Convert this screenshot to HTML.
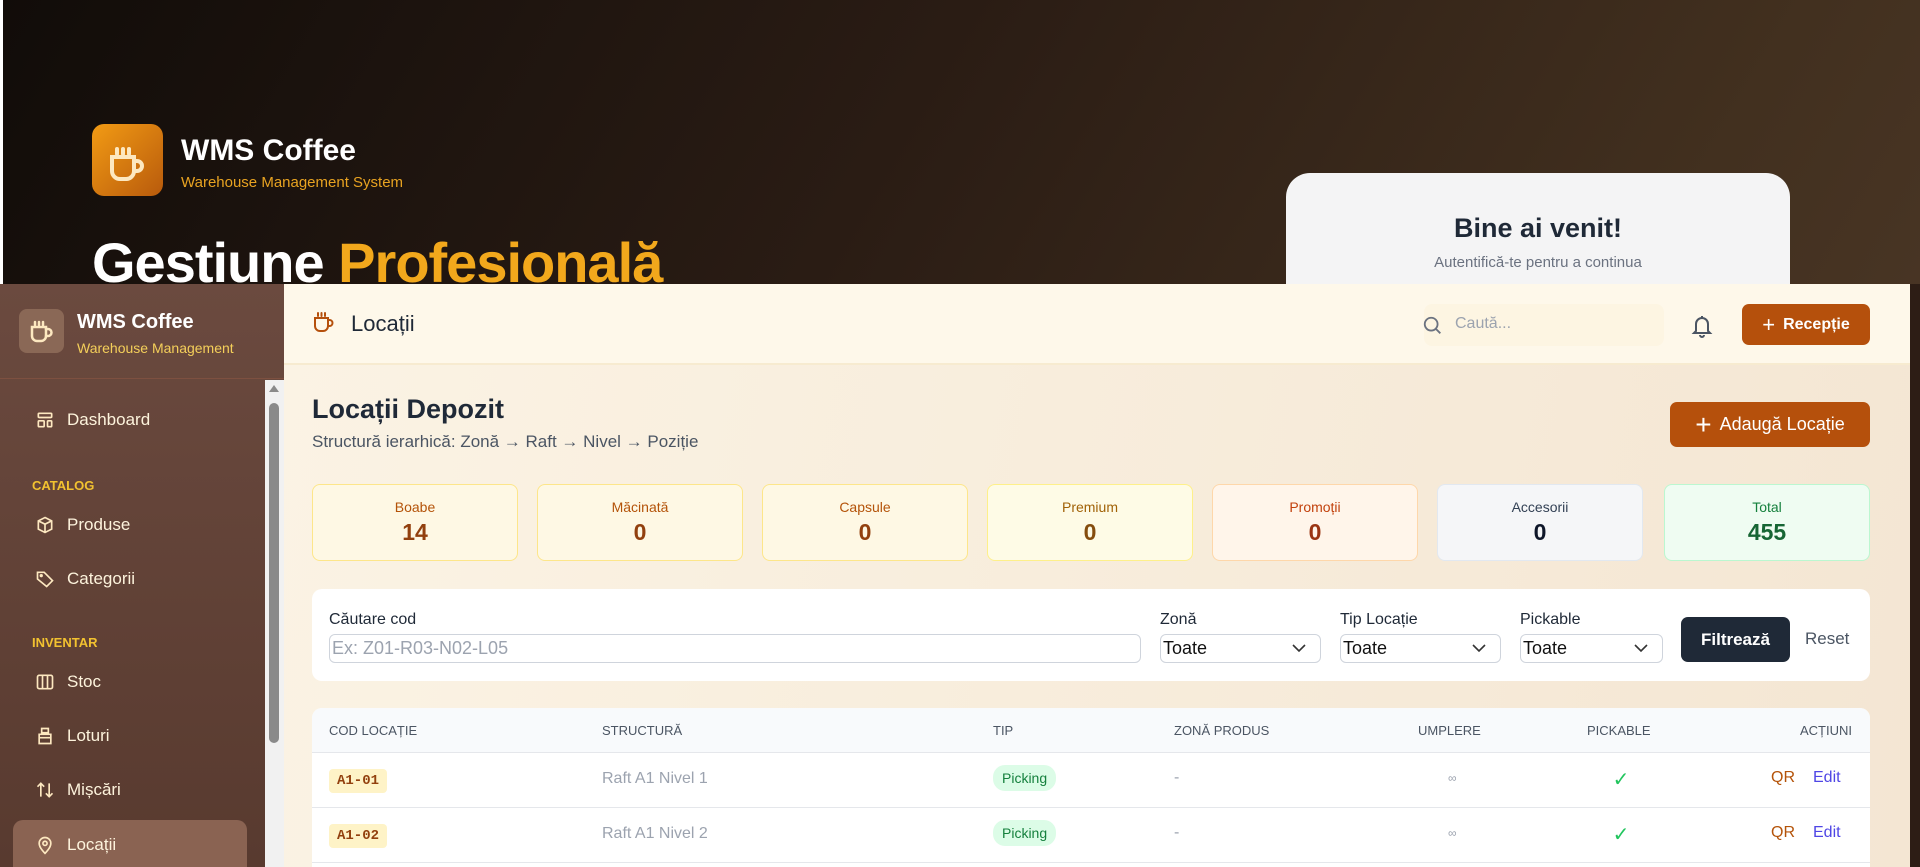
<!DOCTYPE html>
<html style="overflow:hidden;height:867px"><head><meta charset="utf-8"><style>
*{box-sizing:border-box;margin:0;padding:0}
body{width:1920px;height:867px;overflow:hidden;position:relative;font-family:"Liberation Sans",sans-serif;background:#1a120d}
.hero{position:absolute;inset:0;background:linear-gradient(120deg,#110c09 0%,#2a1c14 40%,#42301f 75%,#4f3a2a 100%)}
.hero:before{content:"";position:absolute;left:0;top:0;width:3px;height:867px;background:#fff}
.hl{position:absolute;left:92px;top:124px;width:71px;height:72px;border-radius:12px;background:linear-gradient(135deg,#f29b14,#b85a0c)}
.ht{position:absolute;left:181px;top:134px;color:#fff;font-weight:bold;font-size:30px}
.hs{position:absolute;left:181px;top:174px;color:#e8a321;font-size:15px}
.hh{position:absolute;left:92px;top:230px;color:#fff;font-weight:900;font-size:56px;letter-spacing:-1px}
.hh span{color:#f2a81c}
.card{position:absolute;left:1286px;top:173px;width:504px;height:200px;border-radius:24px;background:#f4f4f5;text-align:center}
.card h2{margin-top:40px;font-size:27px;color:#1f2937}
.card p{margin-top:10px;font-size:15px;color:#6b7280}
.side{position:absolute;left:0;top:284px;width:284px;height:583px;background:linear-gradient(#6b4a3f,#583a2f);overflow:hidden}
.sh{height:95px;border-bottom:1px solid #7d5040;position:relative}
.slogo{position:absolute;left:19px;top:25px;width:45px;height:44px;border-radius:8px;background:#8a6856}
.st{position:absolute;left:77px;top:27px;color:#fff;font-weight:bold;font-size:20px}
.ss{position:absolute;left:77px;top:56px;color:#f4cf5a;font-size:14px}
.scroll{position:absolute;left:265px;top:96px;width:19px;height:487px;background:#f1f1f1}
.scroll div{position:absolute;left:4px;top:23px;width:10px;height:340px;background:#8a8a8a;border-radius:5px}
.scroll i{position:absolute;left:4px;top:5px;border:5px solid transparent;border-bottom:7px solid #8a8a8a;border-top:0}
.nav{position:absolute;left:35px;color:#fdf3dc;font-size:17px;display:flex;align-items:center;gap:12px}
.nav svg{width:20px;height:20px;fill:none;stroke:#fde8c0;stroke-width:2}
.sec{position:absolute;left:32px;color:#f2c230;font-weight:bold;font-size:13px}
.active{position:absolute;left:13px;top:536px;width:234px;height:60px;border-radius:10px;background:#8a6352}
.main{position:absolute;left:284px;top:284px;width:1626px;height:583px;background:linear-gradient(100deg,#fbf3e4,#f4e6d3);overflow:hidden}
.rstrip{position:absolute;left:1910px;top:284px;width:10px;height:583px;background:#2d1d15}
.top{position:absolute;left:0;top:0;width:1626px;height:81px;background:#fef8ea;border-bottom:2px solid #f7ebd0}
.btn{position:absolute;background:#b5500c;color:#fff;border-radius:7px;display:flex;align-items:center;justify-content:center;gap:8px}
.stat{position:absolute;top:200px;width:206px;height:77px;border:1px solid;border-radius:8px;text-align:center}
.stat .l{font-size:14px;margin-top:14px}
.stat .v{font-size:23px;font-weight:bold;margin-top:4px}
.filt{position:absolute;left:28px;top:305px;width:1558px;height:92px;background:#fff;border-radius:10px}
.lab{position:absolute;top:22px;font-size:16px;color:#1f2937}
.inp{position:absolute;top:45px;height:29px;border:1px solid #cfd4dc;border-radius:6px;font-size:18px;color:#111;padding-left:2px;line-height:27px}
.inp svg{position:absolute;right:14px;top:9px}
.tbl{position:absolute;left:28px;top:424px;width:1558px;height:200px;background:#fff;border-radius:10px;overflow:hidden}
.th{height:45px;background:#f8fafc;border-bottom:1px solid #e5e7eb;position:relative}
.th span,.tr span{position:absolute}
.th span{top:15px;font-size:13px;color:#4b5563}
.tr{height:55px;border-bottom:1px solid #e5e7eb;position:relative}
.code{top:16px;left:17px;background:#fef3c7;color:#92400e;font-family:"Liberation Mono",monospace;font-weight:bold;font-size:14px;padding:4px 8px;border-radius:4px}
.pick{top:12px;left:681px;background:#dcfce7;color:#15803d;font-size:14px;padding:5px 9px;border-radius:12px}
</style></head><body>
<div class="hero">
<div class="hl"><svg width="71" height="72" viewBox="0 0 71 72"><g fill="none" stroke="#fde8c0" stroke-width="4" stroke-linecap="round"><path d="M20 33h22v14a8 8 0 0 1-8 8h-6a8 8 0 0 1-8-8z"/><path d="M42 37h3a5 5 0 0 1 0 10h-3"/><path d="M25 25v5M31 25v5M37 25v5"/></g></svg></div>
<div class="ht">WMS Coffee</div><div class="hs">Warehouse Management System</div>
<div class="hh">Gestiune <span>Profesională</span></div>
<div class="card"><h2>Bine ai venit!</h2><p>Autentifică-te pentru a continua</p></div>
</div>
<div class="side">
<div class="sh"><div class="slogo"><svg width="45" height="44" viewBox="0 0 45 44"><g fill="none" stroke="#fde8c0" stroke-width="2.5" stroke-linecap="round"><path d="M13 18h14v9a5 5 0 0 1-5 5h-4a5 5 0 0 1-5-5z"/><path d="M27 20h2a3.5 3.5 0 0 1 0 7h-2"/><path d="M16 13v3M20 13v3M24 13v3"/></g></svg></div>
<div class="st">WMS Coffee</div><div class="ss">Warehouse Management</div></div>
<div class="scroll"><i></i><div></div></div>
<div class="active"></div>
<div class="nav" style="top:126px"><svg viewBox="0 0 24 24"><rect x="4" y="4" width="16" height="5" rx="1"/><rect x="4" y="13" width="7" height="7" rx="1"/><rect x="15" y="13" width="5" height="7" rx="1"/></svg>Dashboard</div>
<div class="sec" style="top:194px">CATALOG</div>
<div class="nav" style="top:231px"><svg viewBox="0 0 24 24"><path d="M12 3l8 4v10l-8 4-8-4V7z M4 7l8 4 8-4 M12 11v10"/></svg>Produse</div>
<div class="nav" style="top:285px"><svg viewBox="0 0 24 24"><path d="M3 12V4h8l10 10-7 7z"/><circle cx="7.5" cy="8" r="1"/></svg>Categorii</div>
<div class="sec" style="top:351px">INVENTAR</div>
<div class="nav" style="top:388px"><svg viewBox="0 0 24 24"><rect x="3" y="4" width="18" height="16" rx="2"/><path d="M9 4v16M15 4v16"/></svg>Stoc</div>
<div class="nav" style="top:442px"><svg viewBox="0 0 24 24"><path d="M8 3h8v5H8z M5 10h14v11H5z M5 14h14"/></svg>Loturi</div>
<div class="nav" style="top:496px"><svg viewBox="0 0 24 24"><path d="M7 20V4M3 8l4-4 4 4M17 4v16M13 16l4 4 4-4"/></svg>Mișcări</div>
<div class="nav" style="top:551px"><svg viewBox="0 0 24 24"><path d="M12 22s7-6.5 7-12a7 7 0 0 0-14 0c0 5.5 7 12 7 12z"/><circle cx="12" cy="10" r="2.5"/></svg>Locații</div>
</div>
<div class="main">
<div class="top">
<svg style="position:absolute;left:27px;top:26px" width="24" height="24" viewBox="0 0 24 24" fill="none" stroke="#b5500c" stroke-width="2" stroke-linecap="round"><path d="M4 8h13v8a5 5 0 0 1-5 5H9a5 5 0 0 1-5-5z"/><path d="M17 10h1.5a3 3 0 0 1 0 6H17"/><path d="M7 3v3M10.5 3v3M14 3v3"/></svg>
<div style="position:absolute;left:67px;top:27px;font-size:22px;color:#1f2937">Locații</div>
<div style="position:absolute;left:1140px;top:20px;width:240px;height:42px;background:#fdf5e2;border-radius:8px"></div>
<svg style="position:absolute;left:1138px;top:31px" width="22" height="22" viewBox="0 0 24 24" fill="none" stroke="#6b7280" stroke-width="2"><circle cx="10" cy="10" r="7"/><path d="M15 15l5 5"/></svg>
<div style="position:absolute;left:1171px;top:31px;font-size:16px;color:#9ca3af">Caută...</div>
<svg style="position:absolute;left:1406px;top:29px" width="24" height="26" viewBox="0 0 24 26" fill="none" stroke="#4b5563" stroke-width="2"><path d="M6 18V11a6 6 0 0 1 12 0v7l2 2H4z M10 22a2 2 0 0 0 4 0 M12 3v2"/></svg>
<div class="btn" style="left:1458px;top:20px;width:128px;height:41px;font-size:16px;font-weight:bold"><span style="font-size:22px;font-weight:normal">+</span>Recepție</div>
</div>
<div style="position:absolute;left:28px;top:110px;font-size:27px;font-weight:bold;color:#1f2937">Locații Depozit</div>
<div style="position:absolute;left:28px;top:148px;font-size:17px;color:#4b5563">Structură ierarhică: Zonă → Raft → Nivel → Poziție</div>
<div class="btn" style="left:1386px;top:118px;width:200px;height:45px;font-size:18px"><span style="font-size:28px;font-weight:300">+</span>Adaugă Locație</div>
<div class="stat" style="left:28px;background:#fef8e4;border-color:#fde68a"><div class="l" style="color:#b45309">Boabe</div><div class="v" style="color:#92400e">14</div></div>
<div class="stat" style="left:253px;background:#fef8e4;border-color:#fde68a"><div class="l" style="color:#b45309">Măcinată</div><div class="v" style="color:#92400e">0</div></div>
<div class="stat" style="left:478px;background:#fef8e4;border-color:#fde68a"><div class="l" style="color:#b45309">Capsule</div><div class="v" style="color:#92400e">0</div></div>
<div class="stat" style="left:703px;background:#fefbe6;border-color:#fef08a"><div class="l" style="color:#a16207">Premium</div><div class="v" style="color:#854d0e">0</div></div>
<div class="stat" style="left:928px;background:#fff5ea;border-color:#fed7aa"><div class="l" style="color:#c2410c">Promoții</div><div class="v" style="color:#9a3412">0</div></div>
<div class="stat" style="left:1153px;background:#f5f6f8;border-color:#e2e8f0"><div class="l" style="color:#334155">Accesorii</div><div class="v" style="color:#0f172a">0</div></div>
<div class="stat" style="left:1380px;background:#effcf2;border-color:#bbf7d0"><div class="l" style="color:#15803d">Total</div><div class="v" style="color:#166534">455</div></div>
<div class="filt">
<div class="lab" style="left:17px">Căutare cod</div>
<div class="inp" style="left:17px;width:812px;color:#9ca3af">Ex: Z01-R03-N02-L05</div>
<div class="lab" style="left:848px">Zonă</div>
<div class="inp" style="left:848px;width:161px">Toate<svg width="14" height="9" viewBox="0 0 14 9" fill="none" stroke="#333" stroke-width="1.6"><path d="M1 1l6 6 6-6"/></svg></div>
<div class="lab" style="left:1028px">Tip Locație</div>
<div class="inp" style="left:1028px;width:161px">Toate<svg width="14" height="9" viewBox="0 0 14 9" fill="none" stroke="#333" stroke-width="1.6"><path d="M1 1l6 6 6-6"/></svg></div>
<div class="lab" style="left:1208px">Pickable</div>
<div class="inp" style="left:1208px;width:143px">Toate<svg width="14" height="9" viewBox="0 0 14 9" fill="none" stroke="#333" stroke-width="1.6"><path d="M1 1l6 6 6-6"/></svg></div>
<div style="position:absolute;left:1369px;top:28px;width:109px;height:45px;background:#1f2937;color:#fff;border-radius:7px;font-size:17px;font-weight:bold;display:flex;align-items:center;justify-content:center">Filtrează</div>
<div style="position:absolute;left:1493px;top:40px;font-size:17px;color:#4b5563">Reset</div>
</div>
<div class="tbl">
<div class="th"><span style="left:17px">COD LOCAȚIE</span><span style="left:290px">STRUCTURĂ</span><span style="left:681px">TIP</span><span style="left:862px">ZONĂ PRODUS</span><span style="left:1106px">UMPLERE</span><span style="left:1275px">PICKABLE</span><span style="right:18px">ACȚIUNI</span></div>
<div class="tr"><span class="code">A1-01</span><span style="left:290px;top:17px;color:#9ca3af;font-size:16px">Raft A1 Nivel 1</span><span class="pick">Picking</span><span style="left:862px;top:16px;color:#9ca3af">-</span><span style="left:1136px;top:18px;color:#9ca3af;font-size:12px">∞</span><span style="left:1268px;top:14px;color:#22c55e;font-size:20px;width:82px;text-align:center">✓</span><span style="left:1459px;top:16px;color:#b45309;font-size:16px">QR</span><span style="left:1501px;top:16px;color:#4f46e5;font-size:16px">Edit</span></div>
<div class="tr"><span class="code">A1-02</span><span style="left:290px;top:17px;color:#9ca3af;font-size:16px">Raft A1 Nivel 2</span><span class="pick">Picking</span><span style="left:862px;top:16px;color:#9ca3af">-</span><span style="left:1136px;top:18px;color:#9ca3af;font-size:12px">∞</span><span style="left:1268px;top:14px;color:#22c55e;font-size:20px;width:82px;text-align:center">✓</span><span style="left:1459px;top:16px;color:#b45309;font-size:16px">QR</span><span style="left:1501px;top:16px;color:#4f46e5;font-size:16px">Edit</span></div>
</div>
</div>
<div class="rstrip"></div>
</body></html>
